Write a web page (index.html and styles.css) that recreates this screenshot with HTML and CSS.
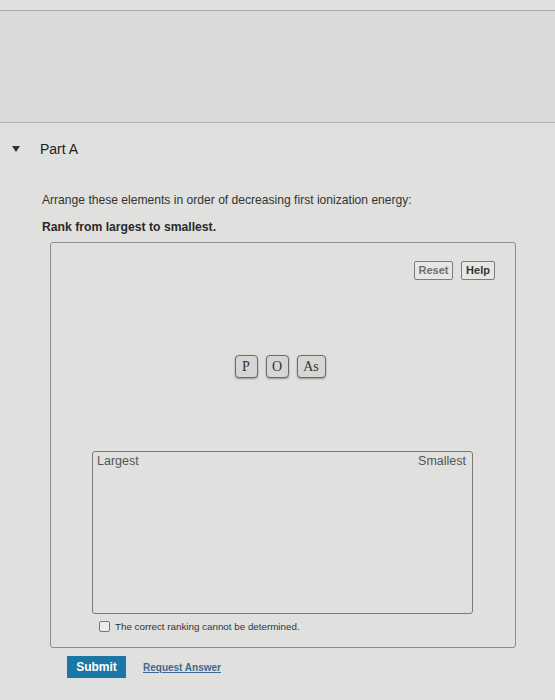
FILE: index.html
```html
<!DOCTYPE html>
<html>
<head>
<meta charset="utf-8">
<link rel="stylesheet" href="styles.css">
</head>
<body>
<div class="header"></div>
<div class="part-title">
  <span class="caret"></span>
  <span class="part-name">Part A</span>
</div>
<p class="prompt">Arrange these elements in order of decreasing first ionization energy:</p>
<p class="instruction">Rank from largest to smallest.</p>
<div class="rank-box">
  <div class="toolbar">
    <span class="tool-btn reset">Reset</span>
    <span class="tool-btn help">Help</span>
  </div>
  <div class="tiles">
    <span class="tile">P</span>
    <span class="tile">O</span>
    <span class="tile">As</span>
  </div>
  <div class="target">
    <div class="target-labels">
      <span>Largest</span>
      <span>Smallest</span>
    </div>
  </div>
  <label class="check-row">
    <span class="checkbox"></span>
    <span>The correct ranking cannot be determined.</span>
  </label>
</div>
<div class="actions">
  <span class="submit">Submit</span>
  <span class="request">Request Answer</span>
</div>
</body>
</html>
```
FILE: styles.css
```css
html, body {
  margin: 0;
  padding: 0;
}
body {
  background: #e0e0de;
  font-family: "Liberation Sans", Arial, sans-serif;
  color: #2b2b2b;
  width: 555px;
  height: 700px;
  overflow: hidden;
}
.header {
  margin-top: 10px;
  height: 111px;
  background: #dadad8;
  border-top: 1px solid #a9a9a7;
  border-bottom: 1px solid #b3b3b1;
}
.part-title {
  display: flex;
  align-items: center;
  height: 18px;
  margin-top: 17px;
}
.caret {
  width: 0;
  height: 0;
  margin-left: 12px;
  border-left: 4px solid transparent;
  border-right: 4px solid transparent;
  border-top: 6px solid #333;
}
.part-name {
  margin-left: 20px;
  font-size: 14px;
  color: #222;
}
.prompt {
  margin: 34px 0 0 42px;
  font-size: 12.1px;
  line-height: 16px;
  color: #333;
}
.instruction {
  margin: 11px 0 0 42px;
  font-size: 12.2px;
  line-height: 16px;
  font-weight: bold;
  color: #2a2a2a;
}
.rank-box {
  margin: 7px 0 0 50px;
  width: 464px;
  height: 404px;
  border: 1px solid #8d8d8b;
  border-radius: 3px;
  display: flex;
  flex-direction: column;
}
.toolbar {
  display: flex;
  justify-content: flex-end;
  gap: 8px;
  margin: 18px 20px 0 0;
}
.tool-btn {
  height: 17px;
  line-height: 17px;
  padding: 0 3px;
  border: 1px solid #7c7c7a;
  border-radius: 2px;
  font-size: 11px;
  font-weight: bold;
  background: #e6e6e4;
}
.reset {
  color: #6e6e6e;
  width: 31px;
  text-align: center;
}
.help {
  color: #333;
  width: 26px;
  text-align: center;
}
.tiles {
  display: flex;
  justify-content: center;
  gap: 8px;
  margin-top: 75px;
  padding-right: 6px;
}
.tile {
  min-width: 17px;
  height: 21px;
  line-height: 21px;
  padding: 0 2px;
  text-align: center;
  font-family: "Liberation Serif", "Times New Roman", serif;
  font-size: 14px;
  color: #333;
  background: #d6d6d4;
  border: 1.5px solid #6a6a68;
  border-radius: 4px;
  box-shadow: 0 1px 2px rgba(0,0,0,0.35);
}
.tile:last-child {
  padding: 0 5px;
}
.target {
  margin: 73px 42px 0 41px;
  height: 161px;
  border: 1px solid #7a7a78;
  border-radius: 3px;
}
.target-labels {
  display: flex;
  justify-content: space-between;
  padding: 2px 6px 0 4px;
  font-size: 12.5px;
  color: #555;
}
.check-row {
  display: flex;
  align-items: center;
  gap: 5px;
  margin: 7px 0 0 48px;
  font-size: 9.8px;
  color: #333;
}
.checkbox {
  width: 9px;
  height: 9px;
  border: 1px solid #777;
  border-radius: 2px;
  background: #ececea;
}
.actions {
  display: flex;
  align-items: center;
  gap: 17px;
  margin: 8px 0 0 67px;
}
.submit {
  width: 59px;
  height: 22px;
  line-height: 22px;
  text-align: center;
  background: #1b78a6;
  color: #fff;
  font-size: 12px;
  font-weight: bold;
}
.request {
  font-size: 10px;
  font-weight: bold;
  color: #3d6890;
  text-decoration: underline;
}
```
